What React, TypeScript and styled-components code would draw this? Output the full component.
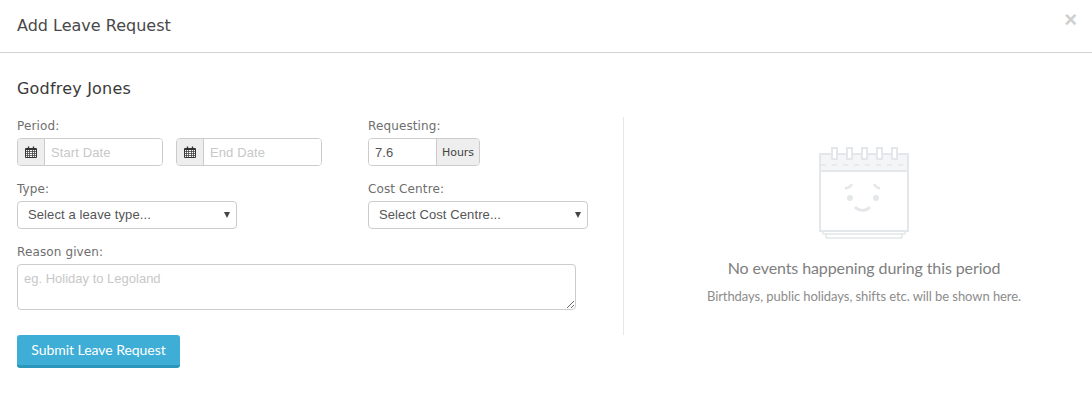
import styled, { createGlobalStyle } from 'styled-components';

const GlobalStyle = createGlobalStyle`
  html, body {
    margin: 0;
    padding: 0;
    background: #fff;
  }
  * {
    box-sizing: border-box;
  }
`;

const CalendarIcon = () => (
  <svg width="14" height="14" viewBox="0 0 14 14" fill="none" stroke="#333" strokeWidth="1">
    <path d="M1.5 3.500h11v9h-11z" fill="#fff" />
    <path d="M1.5 4.500h11" />
    <path d="M1.5 6.500h11M1.5 8.500h11M1.5 10.500h11M3.500 5v7M5.500 5v7M8.500 5v7M10.500 5v7" strokeWidth="0.8" stroke="#444" />
    <path d="M4.500 1.500v2.500M9.500 1.500v2.500" strokeWidth="1.4" />
  </svg>
);

const EmptyCalendar = () => (
  <svg width="90" height="92" viewBox="0 0 90 92" fill="none" stroke="#e4e7e9" strokeWidth="2">
    <path d="M4 87h82M7 91h76M4 84v3M86 84v3M7 87v4M83 87v4" strokeWidth="1.6" />
    <rect x="1" y="7" width="88" height="77" fill="#fff" />
    <rect x="1" y="7" width="88" height="17" fill="#f3f5f6" />
    <path d="M2 18h86" strokeDasharray="5 6" strokeWidth="1.4" />
    <path d="M1 24h88" />
    <rect x="13" y="1" width="5" height="11" fill="#fff" />
    <rect x="28" y="1" width="5" height="11" fill="#fff" />
    <rect x="43" y="1" width="5" height="11" fill="#fff" />
    <rect x="58" y="1" width="5" height="11" fill="#fff" />
    <rect x="73" y="1" width="5" height="11" fill="#fff" />
    <circle cx="31" cy="51" r="3" fill="#e4e7e9" stroke="none" />
    <circle cx="57" cy="51" r="3" fill="#e4e7e9" stroke="none" />
    <path d="M33 37c-1 2-4 4-7 4.500M55 37c1 2 3 4 6 4.500" strokeWidth="2.4" />
    <path d="M36 60c4 4.500 11 4.500 15 0" strokeWidth="2.8" />
  </svg>
);

const Modal = styled.div`
  width: 1092px;
  height: 404px;
  background: #fff;
`;

const Header = styled.header`
  height: 53px;
  padding: 16px 17px 0;
  border-bottom: 1px solid #d2d2d2;
  display: flex;
  justify-content: space-between;
  align-items: flex-start;
`;

const Title = styled.h4`
  margin: 0;
  font: 400 16px/20px 'DejaVu Sans', sans-serif;
  color: #484848;
`;

const Close = styled.span`
  margin: -6px -2px 0 0;
  font: 700 22px/20px 'Liberation Sans', sans-serif;
  color: #cfcfcf;
`;

const Body = styled.div`
  padding: 25px 0 0 17px;
`;

const Name = styled.h3`
  margin: 0 0 17px;
  font: 400 16px/22px 'DejaVu Sans', sans-serif;
  letter-spacing: 0.2px;
  color: #3a3a3a;
`;

const Columns = styled.div`
  display: flex;
`;

const FormSide = styled.section`
  width: 607px;
  height: 218px;
  border-right: 1px solid #e8e8e8;
`;

const Row = styled.div`
  display: flex;
  margin-bottom: 14px;
`;

const Field = styled.div<{ $width: number }>`
  width: ${(p) => p.$width}px;
`;

const Label = styled.label`
  display: block;
  padding-top: 1px;
  margin-bottom: 4px;
  font: 400 12px/16px 'DejaVu Sans', sans-serif;
  letter-spacing: 0.12px;
  color: #6e6e6e;
`;

const DatePair = styled.div`
  display: flex;
  gap: 13px;
`;

const InputGroup = styled.div<{ $width: number }>`
  display: flex;
  width: ${(p) => p.$width}px;
  height: 28px;
  border: 1px solid #ccc;
  border-radius: 4px;
  overflow: hidden;
`;

const Addon = styled.span<{ $left?: boolean }>`
  flex: none;
  display: flex;
  align-items: center;
  justify-content: center;
  width: ${(p) => (p.$left ? 27 : 43)}px;
  background: #eee;
  font: 400 11px/1 'DejaVu Sans', sans-serif;
  color: #444;
  ${(p) => (p.$left ? 'border-right' : 'border-left')}: 1px solid #ccc;
`;

const Input = styled.input`
  flex: 1;
  min-width: 0;
  border: 0;
  outline: 0;
  padding: 0 6px;
  font: 400 13px 'Liberation Sans', sans-serif;
  letter-spacing: 0.1px;
  color: #555;
  background: #fff;
  &::placeholder {
    color: #c8c8c8;
    opacity: 1;
  }
`;

const SelectWrap = styled.div`
  position: relative;
  width: 220px;
  &::after {
    content: '';
    position: absolute;
    top: 11px;
    right: 7px;
    border-style: solid;
    border-width: 6px 3px 0;
    border-color: #444 transparent transparent;
    pointer-events: none;
  }
`;

const Select = styled.select`
  display: block;
  width: 100%;
  height: 28px;
  padding: 0 10px 2px;
  appearance: none;
  border: 1px solid #ccc;
  border-radius: 4px;
  background: #fff;
  font: 400 13px 'Liberation Sans', sans-serif;
  letter-spacing: 0.1px;
  color: #555;
`;

const TextArea = styled.textarea`
  display: block;
  width: 559px;
  height: 46px;
  padding: 6px;
  border: 1px solid #ccc;
  border-radius: 4px;
  outline: 0;
  font: 400 13px 'Liberation Sans', sans-serif;
  color: #555;
  &::placeholder {
    color: #c8c8c8;
    opacity: 1;
  }
`;

const Submit = styled.button`
  display: block;
  width: 163px;
  height: 33px;
  padding: 0 0 2px;
  border: 0;
  border-bottom: 3px solid #2a96ba;
  border-radius: 3px;
  background: #3eaed6;
  font: 400 14px 'Lato', sans-serif;
  letter-spacing: -0.05px;
  color: #fff;
`;

const EmptySide = styled.aside`
  flex: 1;
  display: flex;
  flex-direction: column;
  align-items: center;
  padding: 30px 0 0 12px;
`;

const EmptyTitle = styled.div`
  margin-top: 18px;
  font: 400 16px/22px 'Lato', sans-serif;
  letter-spacing: -0.1px;
  color: #808080;
`;

const EmptyText = styled.div`
  margin-top: 8px;
  font: 400 13px/18px 'Lato', sans-serif;
  letter-spacing: -0.07px;
  color: #8c8c8c;
`;

const App = () => {
  return (
    <Modal>
      <GlobalStyle />
      <Header>
        <Title>Add Leave Request</Title>
        <Close>×</Close>
      </Header>
      <Body>
        <Name>Godfrey Jones</Name>
        <Columns>
          <FormSide>
            <Row>
              <Field $width={351}>
                <Label>Period:</Label>
                <DatePair>
                  <InputGroup $width={146}>
                    <Addon $left><CalendarIcon /></Addon>
                    <Input placeholder="Start Date" />
                  </InputGroup>
                  <InputGroup $width={146}>
                    <Addon $left><CalendarIcon /></Addon>
                    <Input placeholder="End Date" />
                  </InputGroup>
                </DatePair>
              </Field>
              <Field $width={220}>
                <Label>Requesting:</Label>
                <InputGroup $width={112}>
                  <Input defaultValue="7.6" />
                  <Addon>Hours</Addon>
                </InputGroup>
              </Field>
            </Row>
            <Row>
              <Field $width={351}>
                <Label>Type:</Label>
                <SelectWrap>
                  <Select><option>Select a leave type...</option></Select>
                </SelectWrap>
              </Field>
              <Field $width={220}>
                <Label>Cost Centre:</Label>
                <SelectWrap>
                  <Select><option>Select Cost Centre...</option></Select>
                </SelectWrap>
              </Field>
            </Row>
            <Label>Reason given:</Label>
            <TextArea placeholder="eg. Holiday to Legoland" />
          </FormSide>
          <EmptySide>
            <EmptyCalendar />
            <EmptyTitle>No events happening during this period</EmptyTitle>
            <EmptyText>Birthdays, public holidays, shifts etc. will be shown here.</EmptyText>
          </EmptySide>
        </Columns>
        <Submit>Submit Leave Request</Submit>
      </Body>
    </Modal>
  );
};

export default App;
